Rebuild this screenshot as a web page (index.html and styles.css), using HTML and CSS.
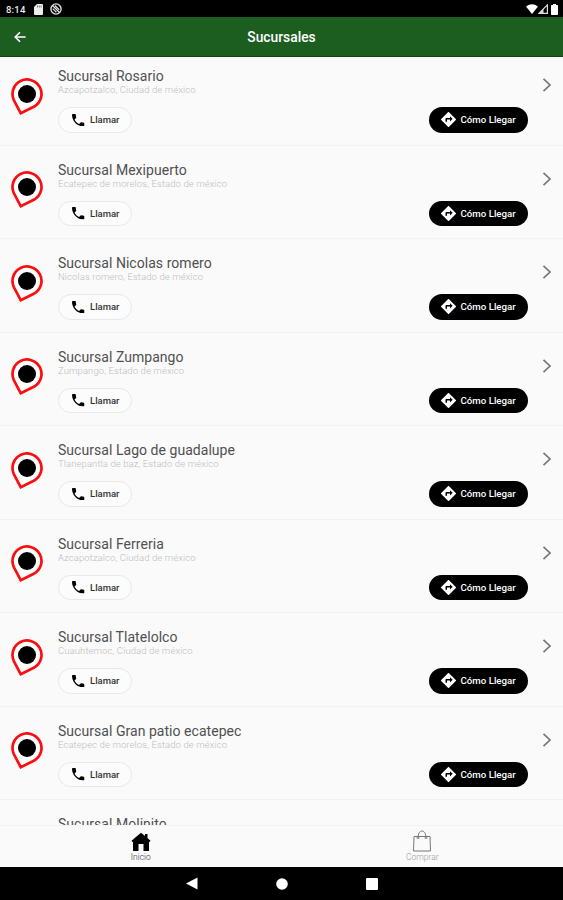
FILE: index.html
```html
<!DOCTYPE html>
<html lang="es">
<head>
    <meta charset="UTF-8">
    <meta name="viewport" content="width=device-width, initial-scale=1.0">
    <title>Sucursales</title>
    <link rel="stylesheet" href="styles.css">
</head>
<body>
    <!-- Iconos compartidos -->
    <svg class="sprite" width="0" height="0">
        <symbol id="pin" viewBox="0 0 34 40">
            <path d="M10.800 36.300L3.840 23.080A14.500 14.500 0 1 1 24.250 29.560Z" fill="#fff" stroke="#fb0d10" stroke-width="2.7"/>
            <circle cx="17" cy="17" r="9" fill="#000"/>
        </symbol>
        <symbol id="phone" viewBox="3 3 18 18">
            <path d="M6.62 10.79c1.44 2.83 3.76 5.14 6.59 6.59l2.2-2.2c.27-.27.67-.36 1.02-.24 1.12.37 2.33.57 3.57.57.55 0 1 .45 1 1V20c0 .55-.45 1-1 1C10.61 21 3 13.39 3 4c0-.55.45-1 1-1h3.5c.55 0 1 .45 1 1 0 1.25.2 2.45.57 3.57.11.35.03.74-.25 1.02l-2.2 2.2z"/>
        </symbol>
        <symbol id="directions" viewBox="2 2 20 20">
            <path d="M21.71 11.29l-9-9a1 1 0 0 0-1.41 0l-9 9a1 1 0 0 0 0 1.41l9 9c.39.39 1.02.39 1.41 0l9-9a1 1 0 0 0 0-1.41zM14 14.5V12h-4v3H8v-4c0-.55.45-1 1-1h5V7.5l3.5 3.5-3.5 3.5z" fill="#fff"/>
        </symbol>
        <symbol id="chevron" viewBox="0 0 10 16">
            <path d="M1.5 1.800L8 8l-6.500 6.200" fill="none" stroke="#777" stroke-width="1.7"/>
        </symbol>
    </svg>

    <div class="screen">
        <div class="status-bar">
            <span class="clock">8:14</span>
            <svg class="sd" width="9" height="11" viewBox="0 0 9 11"><path d="M3 0h5a1 1 0 0 1 1 1v9a1 1 0 0 1-1 1H1a1 1 0 0 1-1-1V3z" fill="#eee"/><path d="M3.5 1.5v2M5.3 1.5v2M7.1 1.5v2" stroke="#555" stroke-width=".8"/></svg>
            <svg class="sync" width="12" height="12" viewBox="0 0 12 12"><circle cx="6" cy="6" r="5.1" fill="none" stroke="#ddd" stroke-width="1.4"/><path d="M2.5 2.5l7 7M4.8 2.5l4.4 4.3M2.7 5.6l3.7 3.6" stroke="#ddd" stroke-width="1.2"/></svg>
            <div class="status-right">
                <svg width="12" height="10" viewBox="0 0 12 10"><path d="M0 2.5Q6-2 12 2.5L6 10z" fill="#fff"/></svg>
                <svg width="10" height="10" viewBox="0 0 10 10"><path d="M.9 9.4L9.4.9v8.5z" fill="none" stroke="#ddd" stroke-width="1.2"/><path d="M1 9.5l4.5-4.5v4.5z" fill="#ddd"/></svg>
                <svg class="battery" width="7" height="11" viewBox="0 0 7 11"><path d="M2 0h3v1h1.2q.8 0 .8.8V10.200q0 .8-.8.8H.8Q0 11 0 10.200V1.800Q0 1 .8 1H2z" fill="#fff"/></svg>
            </div>
        </div>

        <header class="app-bar">
            <svg width="12" height="12" viewBox="0 0 12 12"><path d="M11.600 6H1M6 1.200L1.200 6 6 10.800" fill="none" stroke="#fff" stroke-width="1.600"/></svg>
            <h1>Sucursales</h1>
        </header>

        <main class="list">
            <div class="row">
                <svg class="pin"><use href="#pin"/></svg>
                <div class="info">
                    <h2>Sucursal Rosario</h2>
                    <p>Azcapotzalco, Ciudad de méxico</p>
                    <div class="actions">
                        <button class="btn call"><svg><use href="#phone"/></svg>Llamar</button>
                        <button class="btn go"><svg><use href="#directions"/></svg>Cómo Llegar</button>
                    </div>
                </div>
                <svg class="chevron"><use href="#chevron"/></svg>
            </div>
            <div class="row">
                <svg class="pin"><use href="#pin"/></svg>
                <div class="info">
                    <h2>Sucursal Mexipuerto</h2>
                    <p>Ecatepec de morelos, Estado de méxico</p>
                    <div class="actions">
                        <button class="btn call"><svg><use href="#phone"/></svg>Llamar</button>
                        <button class="btn go"><svg><use href="#directions"/></svg>Cómo Llegar</button>
                    </div>
                </div>
                <svg class="chevron"><use href="#chevron"/></svg>
            </div>
            <div class="row">
                <svg class="pin"><use href="#pin"/></svg>
                <div class="info">
                    <h2>Sucursal Nicolas romero</h2>
                    <p>Nicolas romero, Estado de méxico</p>
                    <div class="actions">
                        <button class="btn call"><svg><use href="#phone"/></svg>Llamar</button>
                        <button class="btn go"><svg><use href="#directions"/></svg>Cómo Llegar</button>
                    </div>
                </div>
                <svg class="chevron"><use href="#chevron"/></svg>
            </div>
            <div class="row">
                <svg class="pin"><use href="#pin"/></svg>
                <div class="info">
                    <h2>Sucursal Zumpango</h2>
                    <p>Zumpango, Estado de méxico</p>
                    <div class="actions">
                        <button class="btn call"><svg><use href="#phone"/></svg>Llamar</button>
                        <button class="btn go"><svg><use href="#directions"/></svg>Cómo Llegar</button>
                    </div>
                </div>
                <svg class="chevron"><use href="#chevron"/></svg>
            </div>
            <div class="row">
                <svg class="pin"><use href="#pin"/></svg>
                <div class="info">
                    <h2>Sucursal Lago de guadalupe</h2>
                    <p>Tlanepantla de baz, Estado de méxico</p>
                    <div class="actions">
                        <button class="btn call"><svg><use href="#phone"/></svg>Llamar</button>
                        <button class="btn go"><svg><use href="#directions"/></svg>Cómo Llegar</button>
                    </div>
                </div>
                <svg class="chevron"><use href="#chevron"/></svg>
            </div>
            <div class="row">
                <svg class="pin"><use href="#pin"/></svg>
                <div class="info">
                    <h2>Sucursal Ferreria</h2>
                    <p>Azcapotzalco, Ciudad de méxico</p>
                    <div class="actions">
                        <button class="btn call"><svg><use href="#phone"/></svg>Llamar</button>
                        <button class="btn go"><svg><use href="#directions"/></svg>Cómo Llegar</button>
                    </div>
                </div>
                <svg class="chevron"><use href="#chevron"/></svg>
            </div>
            <div class="row">
                <svg class="pin"><use href="#pin"/></svg>
                <div class="info">
                    <h2>Sucursal Tlatelolco</h2>
                    <p>Cuauhtemoc, Ciudad de méxico</p>
                    <div class="actions">
                        <button class="btn call"><svg><use href="#phone"/></svg>Llamar</button>
                        <button class="btn go"><svg><use href="#directions"/></svg>Cómo Llegar</button>
                    </div>
                </div>
                <svg class="chevron"><use href="#chevron"/></svg>
            </div>
            <div class="row">
                <svg class="pin"><use href="#pin"/></svg>
                <div class="info">
                    <h2>Sucursal Gran patio ecatepec</h2>
                    <p>Ecatepec de morelos, Estado de méxico</p>
                    <div class="actions">
                        <button class="btn call"><svg><use href="#phone"/></svg>Llamar</button>
                        <button class="btn go"><svg><use href="#directions"/></svg>Cómo Llegar</button>
                    </div>
                </div>
                <svg class="chevron"><use href="#chevron"/></svg>
            </div>
            <div class="row">
                <svg class="pin"><use href="#pin"/></svg>
                <div class="info">
                    <h2>Sucursal Molinito</h2>
                </div>
            </div>
        </main>

        <nav class="tabs">
            <a class="tab active">
                <svg width="20" height="20" viewBox="0 0 20 20"><path d="M10 .8L14 4V2h2.500v4l3 2.700-1 1.300H18v9h-5.500v-7h-5v7H2v-9h-.5l-1-1.300z"/></svg>
                Inicio
            </a>
            <a class="tab">
                <svg width="20" height="22" viewBox="0 0 20 22"><path d="M2 6.500h16l.5 14.500h-17zM6 8.500C6 3 8 1 10 1s4 2 4 7.500M4.500 8h3M12.500 8h3" fill="none" stroke="#777" stroke-width="1"/></svg>
                Comprar
            </a>
        </nav>

        <div class="system-nav">
            <svg width="12" height="13" viewBox="0 0 12 13"><path d="M11.500.5v12L0 6.500z" fill="#fff"/></svg>
            <svg width="12" height="12" viewBox="0 0 12 12"><circle cx="6" cy="6" r="5.800" fill="#fff"/></svg>
            <svg width="12" height="12" viewBox="0 0 12 12"><rect width="12" height="12" rx="1" fill="#fff"/></svg>
        </div>
    </div>
</body>
</html>
```
FILE: styles.css
```css
* {
    box-sizing: border-box;
}
body {
    margin: 0;
    font-family: Roboto, "Liberation Sans", sans-serif;
    background: #fafafa;
}
h1, h2, p {
    margin: 0;
}
svg {
    display: block;
    flex: none;
}
.sprite {
    display: none;
}
.screen {
    display: flex;
    flex-direction: column;
    height: 900px;
    overflow: hidden;
}
.status-bar {
    display: flex;
    align-items: center;
    flex: none;
    height: 17px;
    padding: 1px 5px 0 6px;
    background: #000;
    color: #eee;
}
.clock {
    width: 28px;
    font-size: 9.5px;
    font-weight: 500;
    letter-spacing: 0.2px;
}
.sync {
    margin-left: 7px;
}
.status-right {
    display: flex;
    align-items: center;
    margin-left: auto;
}
.battery {
    margin-left: 3px;
}
.app-bar {
    display: grid;
    grid-template-columns: 40px 1fr 40px;
    align-items: center;
    flex: none;
    height: 40px;
    padding: 1px 14px 0;
    background: #1b5e20;
    border-bottom: 1px solid #124816;
    color: #fff;
}
.app-bar h1 {
    font-size: 13.8px;
    font-weight: 500;
    text-align: center;
}

/* Lista de sucursales */
.list {
    flex: 1;
    min-height: 0;
    overflow: hidden;
}
.row {
    display: flex;
    height: 93.5px;
    padding: 16px 11px 0 10px;
    border-bottom: 1px solid #f2f2f2;
}
.row:first-child {
    height: 88.5px;
    padding-top: 11px;
}
.pin {
    width: 34px;
    height: 40px;
    margin-top: 8.500px;
}
.info {
    flex: 1;
    margin-left: 14px;
}
.info h2 {
    font-size: 14px;
    line-height: 17px;
    font-weight: 400;
    letter-spacing: 0.04px;
    color: #505050;
}
.info p {
    font-size: 9.5px;
    line-height: 10px;
    font-weight: 300;
    letter-spacing: 0.1px;
    color: #bdbdbd;
}
.actions {
    display: flex;
    justify-content: space-between;
    margin-top: 12px;
}
.btn {
    display: flex;
    align-items: center;
    height: 25.500px;
    padding: 0;
    border-radius: 13px;
    font-family: inherit;
    font-size: 9.5px;
    font-weight: 500;
}
.call {
    width: 74px;
    padding-left: 13px;
    border: 1px solid #e8e8e8;
    background: #fcfcfc;
    color: #333;
}
.call svg {
    width: 12.5px;
    height: 12.5px;
    margin-right: 5.5px;
}
.go {
    width: 99px;
    padding-left: 12px;
    border: none;
    background: #000;
    color: #fff;
    font-size: 9.7px;
}
.go svg {
    width: 15px;
    height: 15px;
    margin-right: 4.5px;
}
.chevron {
    width: 10px;
    height: 16px;
    margin-top: 9px;
    margin-left: 14px;
}

/* Barra inferior */
.tabs {
    display: flex;
    flex: none;
    height: 42px;
    border-top: 1px solid #f3f3f3;
    background: #fafafa;
}
.tab {
    display: flex;
    flex: 1;
    flex-direction: column;
    align-items: center;
    justify-content: flex-end;
    padding-bottom: 5px;
    font-size: 8.5px;
    line-height: 10px;
    font-weight: 300;
    color: #999;
}
.tab.active {
    color: #333;
}
.system-nav {
    display: flex;
    align-items: center;
    justify-content: center;
    flex: none;
    gap: 78px;
    height: 33px;
    background: #000;
}
```
